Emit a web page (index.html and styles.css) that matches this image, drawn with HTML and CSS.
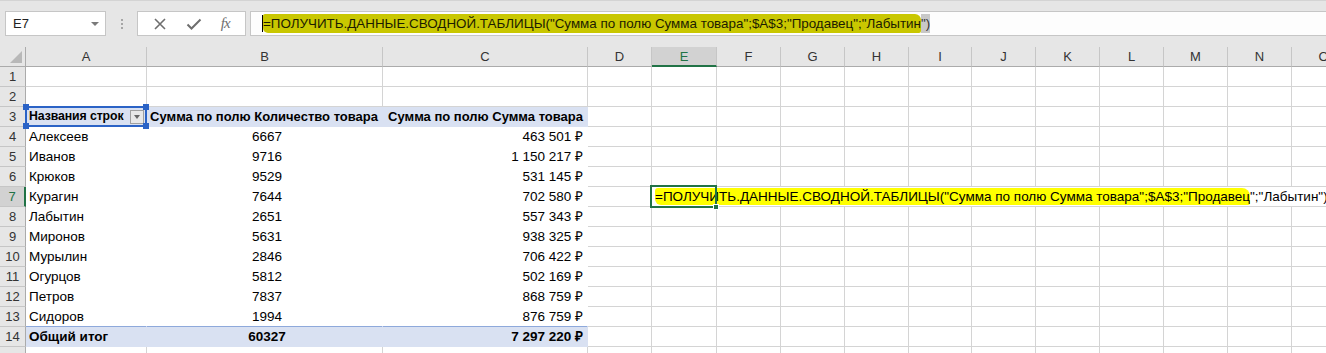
FILE: index.html
```html
<!DOCTYPE html>
<html lang="ru">
<head>
  <meta charset="UTF-8">
  <title>Сводная таблица</title>
  <link rel="stylesheet" href="styles.css">
</head>
<body>
  <div class="toolbar">
    <div class="namebox">
      <span>E7</span>
      <span class="nb-arrow"></span>
    </div>
    <div class="grip"><i></i><i></i><i></i></div>
    <div class="fbuttons">
      <svg class="ico" width="14" height="14" viewBox="0 0 14 14"><path d="M2 2 L12 12 M12 2 L2 12" stroke="#6e6e6e" stroke-width="1.6" fill="none"/></svg>
      <svg class="ico" width="16" height="14" viewBox="0 0 16 14"><path d="M1.5 7.5 L5.5 11.5 L14.5 2.5" stroke="#6e6e6e" stroke-width="2" fill="none"/></svg>
      <span class="fx">fx</span>
    </div>
    <div class="formula">
      <span class="caret"></span><span class="fmark">=ПОЛУЧИТЬ.ДАННЫЕ.СВОДНОЙ.ТАБЛИЦЫ("Сумма по полю Сумма товара";$A$3;"Продавец";"Лабытин</span><span class="fsel">")</span>
    </div>
  </div>

  <div class="sheet" id="sheet"></div>

  <script>
    const cols = ['A','B','C','D','E','F','G','H','I','J','K','L','M','N','O'];
    const data = [
      ['Алексеев', '6667', '463 501 ₽'],
      ['Иванов', '9716', '1 150 217 ₽'],
      ['Крюков', '9529', '531 145 ₽'],
      ['Курагин', '7644', '702 580 ₽'],
      ['Лабытин', '2651', '557 343 ₽'],
      ['Миронов', '5631', '938 325 ₽'],
      ['Мурылин', '2846', '706 422 ₽'],
      ['Огурцов', '5812', '502 169 ₽'],
      ['Петров', '7837', '868 759 ₽'],
      ['Сидоров', '1994', '876 759 ₽']
    ];
    const sheet = document.getElementById('sheet');

    function cell(cls, html) {
      const d = document.createElement('div');
      d.className = 'cell ' + cls;
      if (html) d.innerHTML = html;
      sheet.appendChild(d);
      return d;
    }

    // заголовки столбцов
    cell('corner');
    cols.forEach(c => cell(c === 'E' ? 'ch ch-sel' : 'ch', c));

    for (let r = 1; r <= 15; r++) {
      cell(r === 7 ? 'rh rh-sel' : 'rh', r < 15 ? String(r) : '');

      if (r === 3) {
        cell('pv head a3', 'Названия строк<span class="dd"></span><span class="pick"><b class="h1"></b><b class="h2"></b><b class="h3"></b><b class="h4"></b></span>');
        cell('pv head num-r', 'Сумма по полю Количество товара');
        cell('pv head num-r', 'Сумма по полю Сумма товара');
      } else if (r >= 4 && r <= 13) {
        const row = data[r - 4];
        const last = r === 13 ? ' pre-total' : '';
        cell('pv' + last, row[0]);
        cell('pv num-c' + last, row[1]);
        cell('pv num-r' + last, row[2]);
      } else if (r === 14) {
        cell('pv total', 'Общий итог');
        cell('pv total num-c', '60327');
        cell('pv total num-r', '7 297 220 ₽');
      } else {
        cell('', ''); cell('', ''); cell('', '');
      }

      if (r === 7) {
        cell('', '');
        cell('e7', '<span class="mark">=ПОЛУЧИТЬ.ДАННЫЕ.СВОДНОЙ.ТАБЛИЦЫ("Сумма по полю Сумма товара";$A$3;"Продавец</span>";"Лабытин")<span class="cur"><b></b></span>');
      } else {
        for (let i = 3; i < cols.length; i++) cell('', '');
      }
    }
  </script>
</body>
</html>
```

FILE: styles.css
```css
* {
  box-sizing: border-box;
}

html, body {
  margin: 0;
  padding: 0;
  height: 100%;
  overflow: hidden;
  background: #fff;
  font-family: 'Liberation Sans', Arial, sans-serif;
  color: #000;
}

.toolbar {
  height: 47px;
  background: #e6e6e6;
  border-top: 1px solid #d4d4d4;
  display: flex;
  align-items: flex-start;
  padding-top: 10px;
}

.namebox {
  margin-left: 5px;
  width: 101px;
  height: 25px;
  background: #fff;
  border: 1px solid #c6c6c6;
  display: flex;
  align-items: center;
  justify-content: space-between;
  padding: 0 6px 0 7px;
  font-size: 13px;
  color: #222;
}

.nb-arrow {
  width: 0;
  height: 0;
  border-left: 4px solid transparent;
  border-right: 4px solid transparent;
  border-top: 4px solid #7a7a7a;
}

.grip {
  width: 31px;
  height: 25px;
  display: flex;
  flex-direction: column;
  align-items: center;
  justify-content: center;
  gap: 2px;
}

.grip i {
  width: 2px;
  height: 2px;
  background: #a6a6a6;
}

.fbuttons {
  width: 109px;
  height: 25px;
  background: #fff;
  border: 1px solid #c6c6c6;
  display: flex;
  align-items: center;
  justify-content: space-around;
  padding: 0 6px;
}

.fx {
  font-family: 'Liberation Serif', 'DejaVu Serif', serif;
  font-style: italic;
  font-size: 15px;
  color: #6e6e6e;
  letter-spacing: -1px;
}

.formula {
  flex: 1;
  margin-left: 4px;
  height: 25px;
  background: #fdfdfd;
  border: 1px solid #c6c6c6;
  border-right: none;
  display: flex;
  align-items: center;
  padding-left: 11px;
  font-size: 13.4px;
  white-space: nowrap;
  overflow: hidden;
}

.caret {
  width: 1px;
  height: 17px;
  background: #000;
}

.fmark {
  background: #c9c700;
  padding: 2px 0;
  border-radius: 2px 6px 2px 5px;
  color: #1c1c00;
}

.fsel {
  background: #c8c8c8;
  padding: 2px 0;
  color: #333;
}

.sheet {
  display: grid;
  grid-template-columns: 26px 121px 236px 205px 64px 65px 64px 64px 64px 63px 64px 64px 64px 64px 64px 64px;
  grid-auto-rows: 20px;
  font-size: 13.5px;
}

.cell {
  border-right: 1px solid #d4d4d4;
  border-bottom: 1px solid #d4d4d4;
  padding: 0 3px;
  line-height: 19px;
  white-space: nowrap;
  overflow: hidden;
}

.corner {
  background: #e6e6e6;
  border-right: 1px solid #ababab;
  border-bottom: 1px solid #ababab;
  position: relative;
}

.corner::after {
  content: "";
  position: absolute;
  right: 3px;
  bottom: 3px;
  border-left: 12px solid transparent;
  border-bottom: 12px solid #b8b8b8;
}

.ch {
  background: #e6e6e6;
  border-right: 1px solid #c6c6c6;
  border-bottom: 1px solid #ababab;
  text-align: center;
  color: #333;
  font-size: 13px;
}

.ch-sel {
  background: #d2d2d2;
  color: #217346;
  border-bottom: 2px solid #217346;
}

.rh {
  background: #e6e6e6;
  border-right: 1px solid #ababab;
  border-bottom: 1px solid #c6c6c6;
  text-align: center;
  color: #333;
  font-size: 13px;
  padding: 0;
}

.rh-sel {
  background: #d2d2d2;
  color: #217346;
  border-right: 2px solid #217346;
}

.pv {
  background: #fff;
  border-right-color: #fff;
  border-bottom-color: #fff;
}

.pv.head {
  background: #d9e1f2;
  border-right-color: #d9e1f2;
  border-bottom-color: #d9e1f2;
  font-weight: bold;
  font-size: 13px;
}

.pv.total {
  background: #d9e1f2;
  border-right-color: #d9e1f2;
  border-bottom-color: #d9e1f2;
  font-weight: bold;
}

.pv.pre-total {
  border-bottom-color: #8ea9db;
}

.num-c {
  text-align: center;
  padding-left: 8px;
}

.num-r {
  text-align: right;
  padding-right: 4px;
}

.pv.head.a3 {
  position: relative;
  overflow: visible;
  z-index: 2;
  font-size: 12.3px;
  letter-spacing: -0.1px;
}

.dd {
  position: absolute;
  right: 2px;
  top: 3px;
  width: 14px;
  height: 14px;
  background: #e8e8e8;
  border: 1px solid #a0a0a0;
}

.dd::after {
  content: "";
  position: absolute;
  left: 3px;
  top: 4px;
  border-left: 3.5px solid transparent;
  border-right: 3.5px solid transparent;
  border-top: 4px solid #666;
}

.pick {
  position: absolute;
  left: -1px;
  top: -1px;
  right: -1px;
  bottom: -1px;
  border: 2px solid #2b63c6;
}

.pick b {
  position: absolute;
  width: 6px;
  height: 6px;
  background: #2b63c6;
}

.pick .h1 { left: -4px; top: -4px; }
.pick .h2 { right: -4px; top: -4px; }
.pick .h3 { left: -4px; bottom: -4px; }
.pick .h4 { right: -4px; bottom: -4px; }

.e7 {
  grid-column: 6 / -1;
  position: relative;
  overflow: visible;
  border-right: none;
  padding-left: 3px;
}

.mark {
  background: #ffff00;
  padding: 1px 0;
  border-radius: 3px 8px 2px 6px;
}

.cur {
  position: absolute;
  left: -2px;
  top: -2px;
  width: 67px;
  height: 23px;
  border: 2px solid #217346;
}

.cur b {
  position: absolute;
  right: -4px;
  bottom: -4px;
  width: 6px;
  height: 6px;
  background: #217346;
  border: 1px solid #fff;
}
```
